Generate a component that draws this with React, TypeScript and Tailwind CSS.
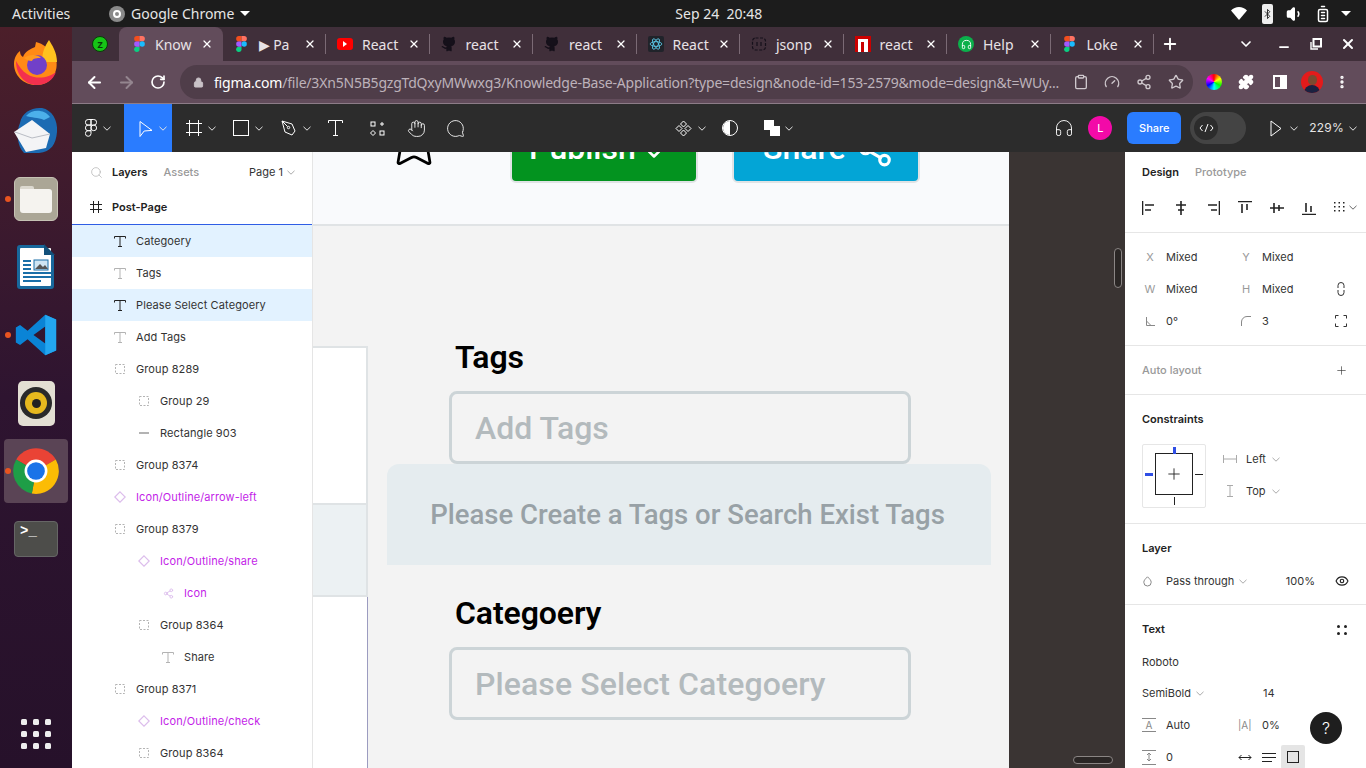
import { ArrowLeft, ArrowRight, RotateCw, Lock, Star, Share2, Puzzle, Plus, X, Minus, ChevronDown, Eye, MoreVertical, Hand, Search, Headphones, Clipboard, Gauge, Github, Volume1, Bluetooth, BatteryFull, MessageCircle } from "lucide-react";

const inter = "font-['Inter',sans-serif]";

function Caret({ className = "text-white" }: { className?: string }) {
  return (
    <svg width="8" height="5" viewBox="0 0 8 5" className={className} fill="none" stroke="currentColor">
      <path d="M.5.8 4 4.2 7.5.8" />
    </svg>
  );
}

function FigmaLogo() {
  return (
    <svg width="11" height="16" viewBox="0 0 24 36">
      <path d="M6 36a6 6 0 0 0 6-6v-6H6a6 6 0 0 0 0 12z" fill="#0acf83" />
      <path d="M0 18a6 6 0 0 1 6-6h6v12H6a6 6 0 0 1-6-6z" fill="#a259ff" />
      <path d="M0 6a6 6 0 0 1 6-6h6v12H6a6 6 0 0 1-6-6z" fill="#f24e1e" />
      <path d="M12 0h6a6 6 0 0 1 0 12h-6z" fill="#ff7262" />
      <circle cx="18" cy="18" r="6" fill="#1abcfe" />
    </svg>
  );
}

const tabs = [
  { title: "Know", icon: "figma", active: true },
  { title: "▶ Pa", icon: "figma" },
  { title: "React", icon: "yt" },
  { title: "react", icon: "gh" },
  { title: "react", icon: "gh" },
  { title: "React", icon: "rx" },
  { title: "jsonp", icon: "json" },
  { title: "react", icon: "npm" },
  { title: "Help", icon: "help" },
  { title: "Loke", icon: "figma" },
];

function TabIcon({ kind }: { kind: string }) {
  if (kind === "figma") return <FigmaLogo />;
  if (kind === "yt")
    return (
      <div className="w-4 h-3 bg-[#f00] rounded-[3px] flex items-center justify-center">
        <div className="w-0 h-0 border-y-[3px] border-y-transparent border-l-[4px] border-l-white" />
      </div>
    );
  if (kind === "gh") return <Github size={16} className="text-[#15101a]" fill="#15101a" />;
  if (kind === "rx")
    return (
      <div className="w-4 h-4 bg-[#20232a] flex items-center justify-center rounded-[2px]">
        <svg width="14" height="14" viewBox="0 0 24 24" fill="none" stroke="#61dafb" strokeWidth="1.3">
          <ellipse cx="12" cy="12" rx="10" ry="4" />
          <ellipse cx="12" cy="12" rx="10" ry="4" transform="rotate(60 12 12)" />
          <ellipse cx="12" cy="12" rx="10" ry="4" transform="rotate(120 12 12)" />
        </svg>
      </div>
    );
  if (kind === "json")
    return (
      <svg width="16" height="16" viewBox="0 0 16 16" fill="none" stroke="#15101a" strokeWidth="1.2" strokeDasharray="3 1.5">
        <rect x="1.5" y="2" width="13" height="12" rx="3" />
        <path d="M6 6v4M10 6v4" strokeDasharray="none" />
      </svg>
    );
  if (kind === "npm")
    return (
      <div className="w-4 h-4 bg-[#cb0000] flex items-start justify-center pt-[3px]">
        <div className="w-[10px] h-[13px] bg-white flex justify-center">
          <div className="w-[3px] h-[10px] mt-[3px] bg-[#cb0000]" />
        </div>
      </div>
    );
  if (kind === "help")
    return (
      <div className="w-4 h-4 rounded-full bg-[#0bb04b] flex items-center justify-center">
        <Headphones size={11} className="text-white" />
      </div>
    );
  return null;
}

function ChromeIcon({ size }: { size: number }) {
  return (
    <svg width={size} height={size} viewBox="0 0 48 48">
      <path d="M24 24 5 13A22 22 0 0 1 43 13Z" fill="#ea4335" />
      <path d="M24 24 43 13A22 22 0 0 1 20 45.6Z" fill="#fbbc05" />
      <path d="M24 24 20 45.6A22 22 0 0 1 5 13Z" fill="#1e9e47" />
      <circle cx="24" cy="24" r="11" fill="#fff" />
      <circle cx="24" cy="24" r="8.5" fill="#1a73e8" />
    </svg>
  );
}

function TopBar() {
  return (
    <div className="h-[27px] bg-[#1c1c1c] flex items-center text-[#e6e6e6] text-[14px] font-['Noto_Sans',sans-serif]">
      <span className="ml-3 w-[97px]">Activities</span>
      <div className="w-4 h-4 rounded-full bg-[#8a8a8a] flex items-center justify-center">
        <div className="w-2 h-2 rounded-full border-2 border-white" />
      </div>
      <span className="ml-[6px]">Google Chrome</span>
      <div className="ml-[6px] w-0 h-0 border-x-[5px] border-x-transparent border-t-[5px] border-t-white" />
      <span className="ml-[425px]">Sep 24&nbsp;&nbsp;20:48</span>
      <div className="ml-auto flex items-center pr-[11px]">
        <div className="w-7 flex justify-center">
          <svg width="16" height="13" viewBox="0 0 16 13" fill="#fff">
            <path d="M8 13 0 3.5C2 1.5 5 0 8 0s6 1.500 8 3.5z" />
          </svg>
        </div>
        <div className="w-7 flex justify-center">
          <div className="w-[11px] h-[20px] bg-[#eee] rounded-[2px] flex items-center justify-center">
            <Bluetooth size={12} className="text-[#222]" />
          </div>
        </div>
        <div className="w-7 flex justify-center">
          <Volume1 size={18} fill="#fff" className="text-white" />
        </div>
        <div className="w-7 flex justify-center">
          <BatteryFull size={18} className="text-white -rotate-90" />
        </div>
        <div className="w-[18px] flex justify-center">
          <div className="w-0 h-0 border-x-[5px] border-x-transparent border-t-[5px] border-t-white" />
        </div>
      </div>
    </div>
  );
}

function TabStrip() {
  return (
    <div className="h-[34px] bg-[#402f3a] flex items-end text-[#e8e2e6] font-['Noto_Sans',sans-serif] text-[14px]">
      <div className="w-[47px] h-[34px] flex items-center justify-end pr-[11px]">
        <div className="w-4 h-4 rounded-full bg-[#16c516] border border-[#0a3a0a] flex items-center justify-center text-[9px] font-bold leading-none text-[#0a3a0a]">
          Z
        </div>
      </div>
      {tabs.map((t, i) => (
        <div
          key={i}
          className={
            t.active
              ? "w-[103.5px] h-[34px] bg-[#624c5b] rounded-t-[8px] flex items-center pl-[12px] pr-[10px]"
              : "w-[103.5px] h-[34px] flex items-center pl-[11px] pr-[10px] relative"
          }
        >
          <div className="w-4 flex justify-center shrink-0">
            <TabIcon kind={t.icon} />
          </div>
          <span className={`${t.active ? "ml-2" : "ml-[9px]"} whitespace-nowrap`}>{t.title}</span>
          <X size={12} strokeWidth={2.5} className="ml-auto text-white" />
          {!t.active && <div className="absolute right-0 top-[7px] w-px h-5 bg-[#7b6a75]" />}
        </div>
      ))}
      <div className="w-[30px] h-[34px] ml-[1px] flex items-center justify-center">
        <Plus size={18} strokeWidth={2.5} className="text-white" />
      </div>
      <div className="ml-[45px] h-[34px] flex items-center text-white">
        <div className="w-8 flex justify-center">
          <ChevronDown size={16} strokeWidth={2.5} />
        </div>
        <div className="ml-[6px] w-8 flex justify-center">
          <Minus size={14} strokeWidth={3} className="mt-[6px]" />
        </div>
        <div className="w-8 flex justify-center">
          <svg width="12" height="12" viewBox="0 0 12 12" fill="none" stroke="#fff" strokeWidth="2">
            <rect x="3.5" y="1" width="7.5" height="7.5" />
            <path d="M1 4v7h7" strokeWidth="1.4" />
          </svg>
        </div>
        <div className="w-8 flex justify-center">
          <X size={16} strokeWidth={3} />
        </div>
      </div>
    </div>
  );
}

function AddressBar() {
  return (
    <div className="h-[43px] bg-[#624c5b] border-b border-b-[#8d7c88] flex items-center">
      <ArrowLeft size={19} strokeWidth={2.5} className="text-white ml-[13px]" />
      <ArrowRight size={19} strokeWidth={2.5} className="text-[#94858f] ml-[13px]" />
      <RotateCw size={16} strokeWidth={2.5} className="text-white ml-[14px]" />
      <div className="ml-[14px] w-[1013px] h-[34px] rounded-full bg-[#4f3d49] flex items-center font-['Noto_Sans',sans-serif] text-[14px]">
        <Lock size={11} fill="#c9c2c7" className="text-[#c9c2c7] ml-[13px]" />
        <span className="ml-[10px] w-[846px] whitespace-nowrap text-[#bdb2ba] tracking-[-0.2px]">
          <span className="text-white">figma.com</span>/file/3Xn5N5B5gzgTdQxyMWwxg3/Knowledge-Base-Application?type=design&amp;node-id=153-2579&amp;mode=design&amp;t=WUy...
        </span>
        <Clipboard size={16} className="text-[#cfc8cd] ml-[13px]" />
        <Gauge size={16} className="text-[#cfc8cd] ml-[15px]" />
        <Share2 size={16} className="text-[#cfc8cd] ml-[16px]" />
        <Star size={16} className="text-[#cfc8cd] ml-[16px]" />
      </div>
      <div className="ml-[13px] w-4 h-4 rounded-full bg-[conic-gradient(#f00,#ff0,#0f0,#0ff,#00f,#f0f,#f00)]" />
      <Puzzle size={16} fill="#fff" className="text-white ml-[16px]" />
      <div className="ml-[19px] w-[14px] h-[14px] border-2 border-white flex justify-end">
        <div className="w-[5px] h-full bg-white" />
      </div>
      <div className="ml-[14px] w-[22px] h-[22px] rounded-full bg-[#e31b1b] overflow-hidden flex flex-col items-center">
        <div className="w-[9px] h-[10px] mt-[4px] rounded-full bg-[#7a4a30]" />
        <div className="w-[16px] h-[8px] bg-[#1b2140] rounded-t-full" />
      </div>
      <MoreVertical size={16} strokeWidth={3} className="text-white ml-[11px]" />
    </div>
  );
}

function ToolCell({ w, active, caret = true, children }: { w: string; active?: boolean; caret?: boolean; children: React.ReactNode }) {
  return (
    <div className={`${w} h-12 shrink-0 flex items-center justify-center gap-[6px] ${active ? "bg-[#2a7cff]" : ""}`}>
      {children}
      {caret && <Caret className="text-[#e5e5e5]" />}
    </div>
  );
}

function FigmaToolbar() {
  const s = { fill: "none", stroke: "#fff", strokeWidth: 1 };
  return (
    <div className={`h-12 bg-[#2c2c2c] flex items-center text-white ${inter}`}>
      <ToolCell w="w-[52px]">
        <svg width="12" height="18" viewBox="0 0 12 18" {...s}>
          <path d="M6 .5H3.2a2.8 2.8 0 0 0 0 5.6H6zM6 .5h2.8a2.8 2.8 0 0 1 0 5.6H6zM6 6.1H3.2a2.8 2.8 0 0 0 0 5.6H6zM6 11.7H3.2A2.8 2.8 0 1 0 6 14.5z" />
          <circle cx="8.8" cy="8.9" r="2.8" />
        </svg>
      </ToolCell>
      <ToolCell w="w-[48px]" active>
        <svg width="14" height="18" viewBox="0 0 14 18" {...s} className="mt-[1px] ml-[9px]">
          <path d="M1 1.5v15l4.2-5.5 7.8-.6z" strokeLinejoin="round" />
        </svg>
      </ToolCell>
      <ToolCell w="w-[57px]">
        <svg width="16" height="16" viewBox="0 0 16 16" {...s}>
          <path d="M3.5 0v16M12.5 0v16M0 3.5h16M0 12.5h16" />
        </svg>
      </ToolCell>
      <ToolCell w="w-[38px]">
        <svg width="16" height="16" viewBox="0 0 16 16" {...s}>
          <rect x=".5" y=".5" width="15" height="15" />
        </svg>
      </ToolCell>
      <ToolCell w="w-[58px]">
        <svg width="16" height="17" viewBox="0 0 16 17" {...s}>
          <path d="M1 1l10 3 3 7-3 4-7-3zM1 1l5.5 5.5" />
          <circle cx="7.5" cy="7.5" r="1.2" />
        </svg>
      </ToolCell>
      <ToolCell w="w-[21px]" caret={false}>
        <svg width="15" height="16" viewBox="0 0 15 16" {...s} className="shrink-0">
          <path d="M.5 3V.5h14V3M7.5.5v15M5 15.5h5" />
        </svg>
      </ToolCell>
      <ToolCell w="w-[62px]" caret={false}>
        <svg width="15" height="15" viewBox="0 0 15 15" {...s}>
          <rect x="1" y="1" width="4" height="4" />
          <rect x="10" y="10" width="4" height="4" />
          <path d="M12 1v4M10 3h4M3 9.5 5.5 12 3 14.5.5 12z" />
        </svg>
      </ToolCell>
      <ToolCell w="w-[16px]" caret={false}>
        <Hand size={19} strokeWidth={1.1} className="shrink-0" />
      </ToolCell>
      <ToolCell w="w-[62px]" caret={false}>
        <MessageCircle size={19} strokeWidth={1.1} className="-scale-x-100" />
      </ToolCell>

      <div className="ml-[189px] flex items-center">
        <div className="flex items-center gap-[6px] w-[39px]">
          <svg width="17" height="17" viewBox="0 0 17 17" {...s}>
            <path d="M8.5 1l3 3-3 3-3-3zM8.5 10l3 3-3 3-3-3zM4 5.5l3 3-3 3-3-3zM13 5.5l3 3-3 3-3-3z" />
          </svg>
          <Caret className="text-[#e5e5e5]" />
        </div>
        <div className="ml-[8px] w-4 h-4 rounded-full border border-white flex justify-start overflow-hidden">
          <div className="w-[7px] h-full bg-white" />
        </div>
        <div className="ml-[26px] w-[16px] h-[16px] relative">
          <div className="absolute left-0 top-0 w-[10px] h-[10px] bg-white" />
          <div className="absolute left-[6px] top-[6px] w-[10px] h-[10px] bg-white" />
        </div>
        <Caret className="text-[#e5e5e5] ml-[5px]" />
      </div>

      <div className="ml-auto flex items-center pr-[9px]">
        <Headphones size={20} strokeWidth={1.1} />
        <div className="ml-[14px] w-6 h-6 rounded-full bg-[#f30aa8] flex items-center justify-center text-[11px]">L</div>
        <div className="ml-[15px] w-[54px] h-8 rounded-[6px] bg-[#2a7cff] flex items-center justify-center text-[11px] font-medium">Share</div>
        <div className="ml-[9px] w-[56px] h-8 rounded-full bg-[#444] flex items-center pl-[4px]">
          <div className="w-6 h-6 rounded-full bg-[#2c2c2c] flex items-center justify-center">
            <svg width="15" height="10" viewBox="0 0 15 10" {...s}>
              <path d="M3.5 2 1 5l2.5 3M11.5 2 14 5l-2.5 3M9 1 6 9" />
            </svg>
          </div>
        </div>
        <svg width="12" height="17" viewBox="0 0 12 17" {...s} className="ml-[24px]">
          <path d="M1 1v15l10-7.5z" />
        </svg>
        <Caret className="text-[#e5e5e5] ml-[8px]" />
        <span className="ml-[11px] text-[12px] text-[#e5e5e5] tracking-[0.2px]">229%</span>
        <Caret className="text-[#e5e5e5] ml-[5px]" />
      </div>
    </div>
  );
}

function DockCell({ dot, active, children }: { dot?: boolean; active?: boolean; children: React.ReactNode }) {
  return (
    <div className="h-[68px] flex items-center justify-center relative">
      {dot && <div className="absolute left-[5px] top-[31px] w-[6px] h-[6px] rounded-full bg-[#e95420]" />}
      <div className={`w-16 h-16 rounded-[4px] flex items-center justify-center ${active ? "bg-[#5a4455]" : ""}`}>{children}</div>
    </div>
  );
}

function Dock() {
  return (
    <div className="w-[72px] h-full shrink-0 flex flex-col bg-gradient-to-b from-[#4c1f2a] via-[#2e1430] to-[#26112a]">
      <div className="h-[2px]" />
      <DockCell>
        <svg width="46" height="48" viewBox="0 0 46 48">
          <path d="M23 3c6 1 16 8 20 17 3 12-4 26-20 26C10 46 1 36 1 25c0-6 3-11 6-13 0 3 1 5 3 6 2-6 8-8 12-10z" fill="#ff8a16" />
          <path d="M36 1c3 5 8 12 8 22H30c-2-8 2-16 6-22z" fill="#ffc21f" />
          <path d="M3 22c0 14 9 24 21 24 9 0 16-5 19-13-7 6-20 8-29 2-5-3-8-8-11-13z" fill="#f3304e" />
          <circle cx="24" cy="26" r="10" fill="#7140c9" />
          <path d="M11 19c5-4 14-4 17 0-4 0-8 0-9 3-3 0-6-1-8-3z" fill="#ff9a1f" />
        </svg>
      </DockCell>
      <DockCell>
        <svg width="48" height="50" viewBox="0 0 48 50">
          <path d="M8 17C10 6 20 1 30 2c10 2 16 12 15 24-1 12-6 20-18 21H12C5 40 4 26 8 17z" fill="#1c6bb3" />
          <path d="M14 10c6-7 18-7 24 1l-6 3c-6-3-13-2-18-4z" fill="#4cb0ea" />
          <path d="M2 26 20 14l18 14-4 14-20 4z" fill="#f4f4f6" />
          <path d="M3 26l17 6 18-4" fill="none" stroke="#b9bcc4" />
        </svg>
      </DockCell>
      <DockCell dot>
        <div className="w-11 h-11 rounded-[6px] bg-[#aba696] border border-[#c6c2b4] flex flex-col items-start justify-center pl-[5px]">
          <div className="w-[14px] h-[3px] bg-[#dcd9d0] rounded-t-[2px]" />
          <div className="w-[32px] h-[24px] bg-[#f5f3ef] rounded-b-[3px] rounded-tr-[3px]" />
        </div>
      </DockCell>
      <DockCell>
        <svg width="38" height="46" viewBox="0 0 38 46">
          <path d="M3 1h24l10 10v31a3 3 0 0 1-3 3H3a3 3 0 0 1-3-3V4a3 3 0 0 1 3-3z" fill="#18689c" />
          <rect x="3" y="4" width="31" height="38" rx="1" fill="#fff" />
          <path d="M27 0l11 11H27z" fill="#12507a" />
          <path d="M6 17h8M6 21h8M6 25h8M6 29h28M6 33h28M6 37h18" stroke="#1a6fa8" strokeWidth="2" />
          <rect x="17" y="16" width="14" height="10" fill="#cfe5f3" stroke="#1a6fa8" />
          <path d="M18 25l5-5 3 3 2-2 3 4z" fill="#555" />
        </svg>
      </DockCell>
      <DockCell dot>
        <svg width="42" height="42" viewBox="0 0 100 100">
          <path d="M72 2 30 40 12 26 2 32v36l10 6 18-14 42 38 26-11V13zM72 30v40L44 50z" fill="#0a84d6" />
          <path d="M72 2l26 11v74L72 98z" fill="#23a6f0" />
        </svg>
      </DockCell>
      <DockCell>
        <div className="w-[37px] h-[45px] rounded-[5px] bg-[#e3dfd3] flex items-center justify-center">
          <div className="w-8 h-8 rounded-full bg-[#2a2a2a] flex items-center justify-center">
            <div className="w-[22px] h-[22px] rounded-full bg-[#e6b91e] flex items-center justify-center">
              <div className="w-[9px] h-[9px] rounded-full bg-[#222]" />
            </div>
          </div>
        </div>
      </DockCell>
      <DockCell dot active>
        <ChromeIcon size={50} />
      </DockCell>
      <DockCell>
        <div className="w-11 h-9 rounded-[4px] bg-[#4d4d4a] border border-[#666] text-white text-[14px] font-['Liberation_Mono',monospace] font-bold pl-[5px] leading-[16px] pt-[1px]">
          &gt;_
        </div>
      </DockCell>
      <div className="mt-auto mb-[19px] grid grid-cols-3 gap-x-[6px] gap-y-[6px] w-[30px] ml-[21px]">
        {Array.from({ length: 9 }).map((_, i) => (
          <div key={i} className="w-[6px] h-[6px] rounded-[1.5px] bg-[#eee]" />
        ))}
      </div>
    </div>
  );
}

type Layer = { name: string; indent: number; icon: "text" | "group" | "rect" | "comp" | "share"; selected?: boolean; purple?: boolean };

const layers: Layer[] = [
  { name: "Categoery", indent: 0, icon: "text", selected: true },
  { name: "Tags", indent: 0, icon: "text" },
  { name: "Please Select Categoery", indent: 0, icon: "text", selected: true },
  { name: "Add Tags", indent: 0, icon: "text" },
  { name: "Group 8289", indent: 0, icon: "group" },
  { name: "Group 29", indent: 1, icon: "group" },
  { name: "Rectangle 903", indent: 1, icon: "rect" },
  { name: "Group 8374", indent: 0, icon: "group" },
  { name: "Icon/Outline/arrow-left", indent: 0, icon: "comp", purple: true },
  { name: "Group 8379", indent: 0, icon: "group" },
  { name: "Icon/Outline/share", indent: 1, icon: "comp", purple: true },
  { name: "Icon", indent: 2, icon: "share", purple: true },
  { name: "Group 8364", indent: 1, icon: "group" },
  { name: "Share", indent: 2, icon: "text" },
  { name: "Group 8371", indent: 0, icon: "group" },
  { name: "Icon/Outline/check", indent: 1, icon: "comp", purple: true },
  { name: "Group 8364", indent: 1, icon: "group" },
];

function LayerIcon({ kind, dark }: { kind: Layer["icon"]; dark?: boolean }) {
  const c = dark ? "#222" : "#b3b3b3";
  if (kind === "text")
    return (
      <svg width="12" height="11" viewBox="0 0 12 11" fill="none" stroke={c}>
        <path d="M.5 2.5V.5h11v2M6 .5v10M4 10.5h4" />
      </svg>
    );
  if (kind === "group")
    return (
      <svg width="10" height="10" viewBox="0 0 10 10" fill="none" stroke={c} strokeDasharray="2 1.5">
        <rect x=".5" y=".5" width="9" height="9" />
      </svg>
    );
  if (kind === "rect") return <div className="w-[10px] h-[2px] bg-[#b3b3b3]" />;
  if (kind === "comp")
    return (
      <svg width="12" height="12" viewBox="0 0 12 12" fill="none" stroke="#dcbdec" strokeWidth="1.2">
        <path d="M6 .8 11.2 6 6 11.2.8 6z" />
      </svg>
    );
  return <Share2 size={11} className="text-[#dcbdec]" />;
}

function LayersPanel() {
  return (
    <div className={`w-[241px] shrink-0 bg-white border-r border-r-[#e5e5e5] overflow-hidden text-[11px] text-[#333] ${inter}`}>
      <div className="h-10 flex items-center pl-[18px] pr-[17px]">
        <Search size={13} strokeWidth={1.2} className="text-[#aaa]" />
        <span className="ml-[9px] font-semibold text-[#222]">Layers</span>
        <span className="ml-4 text-[#999] font-medium">Assets</span>
        <span className="ml-auto">Page 1</span>
        <Caret className="ml-1 text-[#aaa]" />
      </div>
      <div className="h-[33px] flex items-center pl-[18px] pb-[2px] border-b border-b-[#2f5de5]">
        <svg width="12" height="12" viewBox="0 0 12 12" fill="none" stroke="#222">
          <path d="M3.5 0v12M8.5 0v12M0 3.5h12M0 8.5h12" />
        </svg>
        <span className="ml-[10px] font-semibold text-[#222]">Post-Page</span>
      </div>
      {layers.map((l, i) => (
        <div
          key={i}
          className={`h-8 flex items-center ${l.selected ? "bg-[#e2f2ff]" : ""} ${
            l.indent === 0 ? "pl-[40px]" : l.indent === 1 ? "pl-[64px]" : "pl-[88px]"
          }`}
        >
          <div className="w-4 flex items-center justify-center">
            <LayerIcon kind={l.icon} dark={l.selected} />
          </div>
          <span className={`ml-2 tracking-[0.1px] ${l.purple ? "text-[#c31ee8]" : ""}`}>{l.name}</span>
        </div>
      ))}
    </div>
  );
}

function Canvas() {
  return (
    <div className="flex-1 min-w-0 relative overflow-hidden bg-[#3a3433] font-['Roboto',sans-serif]">
      <div className="w-[696px] h-full flex flex-col bg-[#f3f3f3]">
        <div className="h-[74px] shrink-0 bg-[#f9fafc] border-b-2 border-b-[#e0e3e5]" />
        <div className="ml-[74px] w-[604px] flex flex-col">
          <h2 className="mt-[112px] ml-[68px] h-[38px] leading-[38px] text-[32px] font-semibold text-black tracking-[-0.1px]">Tags</h2>
          <div className="mt-[15px] ml-[62px] w-[462px] h-[73px] rounded-[8px] border-[3px] border-[#ccd4d7] flex items-center pl-[23px] text-[32px] font-medium text-[#b3babd]">
            Add Tags
          </div>
          <div className="h-[101px] rounded-t-[12px] bg-[#e5ecef] flex items-center justify-center pr-[3px] text-[27.5px] font-medium text-[#98a1a6]">
            Please Create a Tags or Search Exist Tags
          </div>
          <h2 className="mt-[29px] ml-[68px] h-[38px] leading-[38px] text-[32px] font-semibold text-black tracking-[-0.1px]">Categoery</h2>
          <div className="mt-[15px] ml-[62px] w-[462px] h-[73px] rounded-[8px] border-[3px] border-[#ccd4d7] flex items-center pl-[23px] text-[32px] font-medium text-[#b3babd] tracking-[0.1px]">
            Please Select Categoery
          </div>
        </div>
      </div>

      {/* left part of the frame behind the popup */}
      <div className="absolute left-0 top-[194px] w-[55px] h-[159px] bg-white border-y-2 border-r-2 border-[#dfe3e5]" />
      <div className="absolute left-0 top-[353px] w-[55px] h-[92px] bg-[#ecf1f3] border-r-2 border-b-2 border-[#dfe3e5]" />
      <div className="absolute left-0 top-[445px] w-[55px] bottom-0 bg-white border-r border-r-[#9c9cc0]" />

      <Star size={60} strokeWidth={1.1} className="absolute left-[71px] top-[-41px] text-black" />
      <div className="absolute left-[197px] top-[-44px] w-[188px] h-[75px] rounded-[6px] bg-[#03931f] border-2 border-[#e0e3e5] flex items-center pl-[17px] pt-[4px] text-white text-[32px] font-medium">
        Publish
        <ChevronDown size={20} strokeWidth={3} className="ml-[8px] mt-[13px]" />
      </div>
      <div className="absolute left-[419px] top-[-44px] w-[188px] h-[75px] rounded-[6px] bg-[#03a5d6] border-2 border-[#e0e3e5] flex items-center pl-[29px] pt-[4px] text-white text-[32px] font-medium">
        Share
        <Share2 size={38} strokeWidth={2} className="ml-[10px] mt-[2px]" />
      </div>

      <div className="absolute left-[801px] top-[96px] w-[8px] h-[40px] rounded-full bg-[#2a2625] border border-[#8a8584]" />
      <div className="absolute left-[760px] top-[604px] w-[40px] h-[8px] rounded-full bg-[#2a2625] border border-[#8a8584]" />
    </div>
  );
}

function AlignIcon({ d }: { d: string }) {
  return (
    <svg width="14" height="14" viewBox="0 0 14 14" fill="none" stroke="#222" strokeWidth="1.6">
      <path d={d} />
    </svg>
  );
}

function Field({ label, value }: { label: React.ReactNode; value: string }) {
  return (
    <div className="flex items-center w-[96px]">
      <span className="w-4 flex justify-center text-[#999]">{label}</span>
      <span className="ml-2">{value}</span>
    </div>
  );
}

function DesignPanel() {
  return (
    <div className={`w-[241px] shrink-0 bg-white overflow-hidden text-[11px] text-[#333] relative ${inter}`}>
      <div className="h-10 flex items-center pl-[17px]">
        <span className="font-semibold text-[#222]">Design</span>
        <span className="ml-4 text-[#999] font-medium">Prototype</span>
      </div>
      <div className="h-[41px] border-b border-b-[#e6e6e6] flex items-center pl-[17px] gap-[18px] pb-[9px]">
        <AlignIcon d="M.5 0v14M3 4h9M3 9h6" />
        <AlignIcon d="M7 0v14M2 4h10M4 9h6" />
        <AlignIcon d="M13.5 0v14M2 4h9M5 9h6" />
        <AlignIcon d="M0 .5h14M4 3v9M9 3v6" />
        <AlignIcon d="M0 7h14M4 2v10M9 4v6" />
        <AlignIcon d="M0 13.5h14M4 2v9M9 5v6" />
        <div className="flex items-center gap-[2px]">
          <svg width="13" height="13" viewBox="0 0 13 13" fill="#222">
            {[1, 5, 9].flatMap((y) => [0, 4.5, 9].map((x) => <rect key={`${x}-${y}`} x={x} y={y} width="1.5" height="1.5" />))}
          </svg>
          <Caret className="text-[#666]" />
        </div>
      </div>

      <div className="h-[113px] border-b border-b-[#e6e6e6] pt-[8px] pl-[17px] flex flex-col">
        <div className="h-8 flex items-center">
          <Field label="X" value="Mixed" />
          <Field label="Y" value="Mixed" />
        </div>
        <div className="h-8 flex items-center">
          <Field label="W" value="Mixed" />
          <Field label="H" value="Mixed" />
          <svg width="8" height="14" viewBox="0 0 8 14" fill="none" stroke="#333" className="ml-[3px]">
            <path d="M1 6V3.5a3 3 0 0 1 6 0V6M1 8v2.5a3 3 0 0 0 6 0V8" />
          </svg>
        </div>
        <div className="h-8 flex items-center">
          <Field
            label={
              <svg width="9" height="9" viewBox="0 0 9 9" fill="none" stroke="#888">
                <path d="M.5 0v8.5H9M.5 4 5 8.5" />
              </svg>
            }
            value="0°"
          />
          <Field
            label={
              <svg width="10" height="10" viewBox="0 0 10 10" fill="none" stroke="#888">
                <path d="M.5 10V6A5.5 5.5 0 0 1 6 .5h4" />
              </svg>
            }
            value="3"
          />
          <svg width="12" height="12" viewBox="0 0 12 12" fill="none" stroke="#333" className="ml-[1px]">
            <path d="M.5 3.5V.5h3M8.500.5h3v3M11.500 8.500v3h-3M3.500 11.500h-3v-3" />
          </svg>
        </div>
      </div>

      <div className="h-[49px] border-b border-b-[#e6e6e6] flex items-center pl-[17px] pr-[18px] justify-between">
        <span className="font-medium text-[#999]">Auto layout</span>
        <Plus size={13} strokeWidth={1.2} className="text-[#333]" />
      </div>

      <div className="h-[129px] border-b border-b-[#e6e6e6] pl-[17px] flex flex-col">
        <div className="h-[49px] flex items-center font-semibold text-[#222]">Constraints</div>
        <div className="flex">
          <div className="w-16 h-16 border border-[#e6e6e6] rounded-[2px] relative">
            <div className="absolute left-[12px] top-[8px] w-[38px] h-[42px] border border-[#222] flex items-center justify-center">
              <Plus size={18} strokeWidth={1.2} className="text-[#222]" />
            </div>
            <div className="absolute left-[30px] top-[2px] w-[3px] h-[7px] bg-[#2f4ee5]" />
            <div className="absolute left-[31px] bottom-[2px] w-px h-[8px] bg-[#222]" />
            <div className="absolute left-[2px] top-[28px] w-[8px] h-[3px] bg-[#2f4ee5]" />
            <div className="absolute right-[2px] top-[29px] w-[8px] h-px bg-[#222]" />
          </div>
          <div className="ml-[17px] -mt-px flex flex-col">
            <div className="h-8 flex items-center">
              <svg width="14" height="8" viewBox="0 0 14 8" fill="none" stroke="#aaa">
                <path d="M.5 0v8M13.5 0v8M1 4h12" />
              </svg>
              <span className="ml-[9px]">Left</span>
              <Caret className="ml-[6px] text-[#aaa]" />
            </div>
            <div className="h-8 flex items-center">
              <svg width="14" height="12" viewBox="0 0 14 12" fill="none" stroke="#aaa">
                <path d="M4 .5h6M4 11.5h6M7 0v12" />
              </svg>
              <span className="ml-[9px]">Top</span>
              <Caret className="ml-[6px] text-[#aaa]" />
            </div>
          </div>
        </div>
      </div>

      <div className="h-[81px] border-b border-b-[#e6e6e6] pl-[17px] pr-[17px] flex flex-col">
        <div className="h-[49px] flex items-center font-semibold text-[#222]">Layer</div>
        <div className="flex items-center">
          <svg width="9" height="11" viewBox="0 0 9 11" fill="none" stroke="#888" className="ml-[1px]">
            <path d="M4.5.8c2 2 3.7 3.5 3.7 5.5a3.7 3.7 0 0 1-7.4 0C.8 4.3 2.5 2.800 4.500.8z" />
          </svg>
          <span className="ml-[14px]">Pass through</span>
          <Caret className="ml-[5px] text-[#aaa]" />
          <span className="ml-auto">100%</span>
          <Eye size={14} className="ml-[20px] text-[#222]" />
        </div>
      </div>

      <div className="pl-[17px] flex flex-col">
        <div className="h-[49px] flex items-center font-semibold text-[#222] pr-[19px] justify-between">
          Text
          <div className="grid grid-cols-2 gap-[4px]">
            {[0, 1, 2, 3].map((k) => (
              <div key={k} className="w-[3px] h-[3px] rounded-full bg-[#222]" />
            ))}
          </div>
        </div>
        <div className="h-[17px] flex items-center">Roboto</div>
        <div className="mt-[6px] h-8 flex items-center">
          <span className="w-[50px]">SemiBold</span>
          <Caret className="ml-[4px] text-[#aaa]" />
          <span className="ml-[59px]">14</span>
        </div>
        <div className="h-8 flex items-center">
          <span className="w-[14px] text-[#888] border-y border-[#888] h-[14px] leading-[13px] text-center text-[10px]">A</span>
          <span className="ml-[10px] w-[72px]">Auto</span>
          <span className="w-6 text-[#888] text-[10px]">|A|</span>
          <span>0%</span>
        </div>
        <div className="h-8 flex items-center">
          <svg width="14" height="15" viewBox="0 0 14 15" fill="none" stroke="#888" className="mr-[10px]">
            <path d="M0 .5h14M0 14.5h14M7 3v8M5 5l2-2 2 2M5 9l2 2 2-2" />
          </svg>
          <span className="w-[72px]">0</span>
          <svg width="14" height="9" viewBox="0 0 14 9" fill="none" stroke="#222">
            <path d="M1 4.5h12M3.5 2 1 4.5 3.5 7M10.5 2 13 4.5 10.5 7" />
          </svg>
          <svg width="14" height="9" viewBox="0 0 14 9" fill="none" stroke="#222" className="ml-[10px]">
            <path d="M0 .5h14M0 4.5h14M0 8.5h10" />
          </svg>
          <div className="ml-[5px] w-6 h-6 bg-[#e5e5e5] rounded-[2px] flex items-center justify-center">
            <div className="w-3 h-3 border border-[#222]" />
          </div>
        </div>
      </div>

      <div className="absolute left-[185px] top-[560px] w-8 h-8 rounded-full bg-[#1e1e1e] text-white flex items-center justify-center text-[16px] font-light">?</div>
    </div>
  );
}

export default function App() {
  return (
    <div className="w-[1366px] h-[768px] overflow-hidden flex flex-col bg-[#1c1c1c]">
      <TopBar />
      <div className="flex-1 min-h-0 flex">
        <Dock />
        <div className="flex-1 min-w-0 flex flex-col">
          <TabStrip />
          <AddressBar />
          <FigmaToolbar />
          <div className="flex-1 min-h-0 flex">
            <LayersPanel />
            <Canvas />
            <DesignPanel />
          </div>
        </div>
      </div>
    </div>
  );
}
